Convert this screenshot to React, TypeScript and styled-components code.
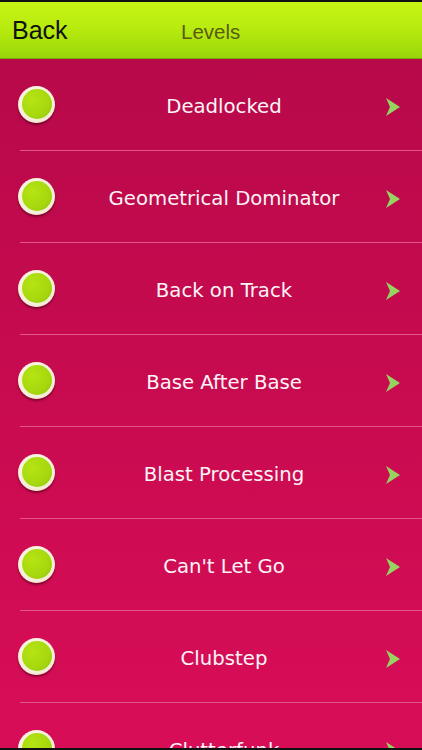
import React from "react";
import styled, { createGlobalStyle } from "styled-components";

const levels = [
  "Deadlocked",
  "Geometrical Dominator",
  "Back on Track",
  "Base After Base",
  "Blast Processing",
  "Can't Let Go",
  "Clubstep",
  "Clutterfunk",
];

const GlobalStyle = createGlobalStyle`
  html, body {
    margin: 0;
    padding: 0;
    background: #111;
  }
`;

const Screen = styled.div`
  width: 422px;
  height: 750px;
  overflow: hidden;
  display: flex;
  flex-direction: column;
  background: #111;
  padding: 2px 0;
  box-sizing: border-box;
`;

const Header = styled.div`
  height: 57px;
  flex-shrink: 0;
  display: flex;
  align-items: center;
  background: linear-gradient(to bottom, #c8f414 0%, #b6ea0e 50%, #98d60a 100%);
  border-bottom: 1px solid #7aa80c;
  box-sizing: border-box;
`;

const BackButton = styled.span`
  font-family: "Liberation Sans", Arial, sans-serif;
  font-size: 25px;
  color: #111;
  padding-left: 12px;
  width: 181px;
  box-sizing: border-box;
`;

const Title = styled.span`
  font-family: "Liberation Sans", Arial, sans-serif;
  font-size: 20.5px;
  color: #5b5a12;
  padding-top: 3px;
`;

const List = styled.div`
  flex: 1;
  background: linear-gradient(to bottom, #b8094a 0%, #c90b50 50%, #d80d58 100%);
  overflow: hidden;
`;

const Row = styled.div`
  height: 92px;
  display: flex;
  align-items: center;
  position: relative;
  padding-left: 18px;
  padding-right: 22px;
  box-sizing: border-box;
  &::after {
    content: "";
    position: absolute;
    left: 20px;
    right: 0;
    bottom: 0;
    height: 1px;
    background: #e4558a;
  }
`;

const Dot = styled.div`
  width: 37px;
  height: 37px;
  border-radius: 50%;
  flex-shrink: 0;
  background: radial-gradient(circle at 45% 40%, #fffdf0 0%, #f5ecd6 70%, #e6d2c0 100%);
  box-shadow: 0 2px 2px rgba(70, 0, 20, 0.55);
  display: flex;
  align-items: center;
  justify-content: center;
  margin-top: -2px;
  &::before {
    content: "";
    width: 30px;
    height: 30px;
    border-radius: 50%;
    background: radial-gradient(circle at 35% 35%, #b6e414 0%, #a6d80e 60%, #8ec40a 100%);
  }
`;

const Name = styled.span`
  flex: 1;
  text-align: center;
  font-family: "DejaVu Sans", Verdana, sans-serif;
  font-size: 19.7px;
  color: #fdf4f6;
  padding-left: 8px;
  padding-top: 3px;
`;

const Arrow = styled.svg`
  width: 15px;
  height: 18px;
  flex-shrink: 0;
  margin-top: 3px;
`;

export default function App() {
  return (
    <>
      <GlobalStyle />
      <Screen>
        <Header>
          <BackButton>Back</BackButton>
          <Title>Levels</Title>
        </Header>
        <List>
          {levels.map((name) => (
            <Row key={name}>
              <Dot />
              <Name>{name}</Name>
              <Arrow viewBox="0 0 15 18">
                <path d="M1 0 L15 9 L1 18 L5 9 Z" fill="#95d460" />
              </Arrow>
            </Row>
          ))}
        </List>
      </Screen>
    </>
  );
}
